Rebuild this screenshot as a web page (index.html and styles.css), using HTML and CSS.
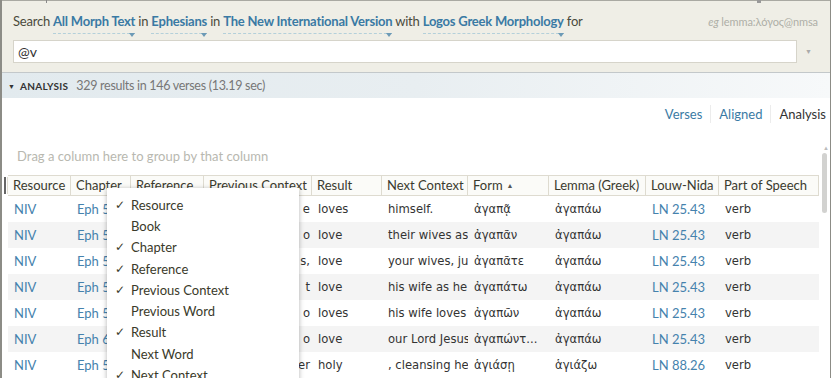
FILE: index.html
```html
<!DOCTYPE html>
<html>
<head>
<meta charset="utf-8">
<link rel="stylesheet" href="styles.css">
</head>
<body>
<div class="app">
  <div class="topmarks"><span class="tm tm1"></span><span class="tm tm2"></span></div>
  <section class="search">
    <div class="search-line">
      <div class="sentence">Search <a class="pick">All Morph Text</a> in <a class="pick">Ephesians</a> in <a class="pick">The New International Version</a> with <a class="pick">Logos Greek Morphology</a> for</div>
      <div class="hint"><i>eg</i> lemma:λόγος@nmsa</div>
    </div>
    <div class="input-row">
      <div class="input">@v</div>
      <span class="drop">▼</span>
    </div>
  </section>
  <div class="bar">
    <span class="tri">▼</span><span class="bar-title">ANALYSIS</span><span class="bar-info">329 results in 146 verses (13.19 sec)</span>
  </div>
  <div class="content">
    <nav class="tabs">
      <a class="tab link">Verses</a><span class="sep"></span><a class="tab link">Aligned</a><span class="sep"></span><span class="tab cur">Analysis</span>
    </nav>
    <div class="group">Drag a column here to group by that column</div>
    <div class="gridwrap">
      <div class="grid">
        <div class="row head">
          <span class="handle"></span>
          <span class="c c1">Resource</span><span class="c c2">Chapter</span><span class="c c3">Reference</span><span class="c c4">Previous Context</span><span class="c c5">Result</span><span class="c c6">Next Context</span><span class="c c7">Form <span class="sort">▲</span></span><span class="c c8">Lemma (Greek)</span><span class="c c9">Louw-Nida</span><span class="c c10">Part of Speech</span>
        </div>
        <div class="row"><span class="handle"></span><span class="c c1 lk">NIV</span><span class="c c2 lk">Eph 5</span><span class="c c3"></span><span class="c c4 r">e</span><span class="c c5">loves</span><span class="c c6">himself.</span><span class="c c7">ἀγαπᾷ</span><span class="c c8">ἀγαπάω</span><span class="c c9 lk">LN 25.43</span><span class="c c10">verb</span></div>
        <div class="row alt"><span class="handle"></span><span class="c c1 lk">NIV</span><span class="c c2 lk">Eph 5</span><span class="c c3"></span><span class="c c4 r">o</span><span class="c c5">love</span><span class="c c6">their wives as</span><span class="c c7">ἀγαπᾶν</span><span class="c c8">ἀγαπάω</span><span class="c c9 lk">LN 25.43</span><span class="c c10">verb</span></div>
        <div class="row"><span class="handle"></span><span class="c c1 lk">NIV</span><span class="c c2 lk">Eph 5</span><span class="c c3"></span><span class="c c4 r">s,</span><span class="c c5">love</span><span class="c c6">your wives, just</span><span class="c c7">ἀγαπᾶτε</span><span class="c c8">ἀγαπάω</span><span class="c c9 lk">LN 25.43</span><span class="c c10">verb</span></div>
        <div class="row alt"><span class="handle"></span><span class="c c1 lk">NIV</span><span class="c c2 lk">Eph 5</span><span class="c c3"></span><span class="c c4 r">t</span><span class="c c5">love</span><span class="c c6">his wife as he</span><span class="c c7">ἀγαπάτω</span><span class="c c8">ἀγαπάω</span><span class="c c9 lk">LN 25.43</span><span class="c c10">verb</span></div>
        <div class="row"><span class="handle"></span><span class="c c1 lk">NIV</span><span class="c c2 lk">Eph 5</span><span class="c c3"></span><span class="c c4 r">o</span><span class="c c5">loves</span><span class="c c6">his wife loves</span><span class="c c7">ἀγαπῶν</span><span class="c c8">ἀγαπάω</span><span class="c c9 lk">LN 25.43</span><span class="c c10">verb</span></div>
        <div class="row alt"><span class="handle"></span><span class="c c1 lk">NIV</span><span class="c c2 lk">Eph 6</span><span class="c c3"></span><span class="c c4 r">o</span><span class="c c5">love</span><span class="c c6">our Lord Jesus</span><span class="c c7">ἀγαπώντ...</span><span class="c c8">ἀγαπάω</span><span class="c c9 lk">LN 25.43</span><span class="c c10">verb</span></div>
        <div class="row"><span class="handle"></span><span class="c c1 lk">NIV</span><span class="c c2 lk">Eph 5</span><span class="c c3"></span><span class="c c4 r">er</span><span class="c c5">holy</span><span class="c c6">, cleansing her</span><span class="c c7">ἁγιάσῃ</span><span class="c c8">ἁγιάζω</span><span class="c c9 lk">LN 88.26</span><span class="c c10">verb</span></div>
      </div>
      <div class="scroll"><span class="up">▲</span><span class="thumb"></span></div>
    </div>
    <ul class="menu">
      <li class="on">Resource</li>
      <li>Book</li>
      <li class="on">Chapter</li>
      <li class="on">Reference</li>
      <li class="on">Previous Context</li>
      <li>Previous Word</li>
      <li class="on">Result</li>
      <li>Next Word</li>
      <li class="on">Next Context</li>
    </ul>
  </div>
</div>
</body>
</html>
```

FILE: styles.css
```css
* { box-sizing: border-box; }
html, body { margin: 0; padding: 0; }
body {
  width: 833px; height: 378px; overflow: hidden; background: #fff;
  font-family: Lato, "Open Sans", sans-serif; color: #3a3a2e;
}
.app {
  position: relative;
  width: 831px; height: 378px;
  border-left: 2px solid #8c8c86;
  border-right: 1px solid #8c8c86;
  display: flex; flex-direction: column;
}
.topmarks { height: 2px; background: #efeee6; border-top: 1px solid #a9a9a2; position: relative; }
.tm { position: absolute; top: -1px; width: 1px; height: 3px; background: #888; }
.tm1 { left: 44px; }
.tm2 { left: 755px; width: 4px; background: #999; }
.search {
  background: #efeee6; height: 72px;
  padding: 11px 0 0 11px;
  border-bottom: 1px solid #c3c8ca;
}
.search-line { display: flex; justify-content: space-between; align-items: baseline; height: 24px; padding-right: 12px; }
.sentence { font-size: 13px; color: #4a4a3c; letter-spacing: -0.22px; }
.pick {
  position: relative; color: #3a7aa4; font-weight: 700;
  border-bottom: 1px dashed #b4d0da; padding-bottom: 4px;
}
.pick::after {
  content: ""; position: absolute; right: 0; bottom: -4px;
  border-left: 3px solid transparent; border-right: 3px solid transparent;
  border-top: 4px solid #6c9ab6;
}
.hint { font-size: 11px; color: #aeaea6; letter-spacing: -0.1px; }
.input-row { display: flex; align-items: center; margin-top: 3px; }
.input {
  width: 784px; height: 23px; background: #fff; border: 1px solid #d6d4ca;
  font-size: 14px; padding: 2px 0 0 4px; color: #333;
}
.drop { font-size: 7px; color: #aaa; margin-left: 8px; }
.bar {
  height: 25px; display: flex; align-items: center; padding-left: 6px;
  background: linear-gradient(to right, #e2eaee 0%, #e8eef1 50%, #f7f9fa 100%);
}
.tri { font-size: 7px; color: #333; margin-right: 5px; }
.bar-title { font-size: 10px; font-weight: 700; letter-spacing: 0.3px; color: #333; margin-right: 8px; }
.bar-info { font-size: 12.5px; color: #777; letter-spacing: -0.3px; }
.content { position: relative; flex: 1; background: #fff; }
.tabs { display: flex; justify-content: flex-end; align-items: center; height: 30px; padding: 2px 4px 0 0; font-size: 13px; }
.tab { padding: 0 8px; }
.tab:last-child { padding-right: 0; }
.link { color: #3a7aa4; }
.cur { color: #333; }
.sep { width: 1px; height: 18px; background: #ececec; }
.group { font-size: 13px; color: #b8b8b0; padding: 20px 0 0 15px; height: 47px; }
.gridwrap { display: flex; }
.grid { width: 817px; }
.row { display: flex; height: 26px; align-items: center; font-family: "DejaVu Sans", sans-serif; font-size: 11.6px; color: #333; padding-top: 1px; }
.row.alt { background: linear-gradient(#f4f4f4, #f4f4f4) no-repeat 6px 0 / 811px 100%; }
.row.head { height: 21px; font-family: Lato, sans-serif; font-size: 13px; color: #3a3a2e; align-items: stretch; padding-top: 0; }
.head .c { border: 1px solid #dedbd0; border-left: none; background: #fbfbf8; display: flex; align-items: center; padding-left: 5px; }
.handle { width: 6px; flex: none; align-self: stretch; }
.head .handle { border-left: 2px solid #666; margin-left: 2px; height: 17px; align-self: center; width: 4px; border-right: 1px solid #dedbd0; }
.c { flex: none; white-space: nowrap; overflow: hidden; padding-left: 6px; }
.c1 { width: 63px; }
.c2 { width: 60px; }
.c3 { width: 73px; }
.c4 { width: 108px; }
.c5 { width: 70px; }
.c6 { width: 86px; }
.c7 { width: 81px; }
.c8 { width: 97px; }
.c9 { width: 73px; }
.c10 { width: 100px; }
.r { text-align: right; padding-right: 2px; }
.lk { color: #4582ad; font-family: Lato, sans-serif; font-size: 13px; }
.sort { font-size: 7px; color: #555; margin-left: 4px; }
.scroll { position: relative; width: 12px; }
.up { position: absolute; left: 4px; top: -31px; font-size: 6px; color: #bbb; }
.thumb { position: absolute; left: 3px; top: -22px; width: 5px; height: 60px; background: #d2d2d0; border-radius: 3px; }
.menu {
  position: absolute; left: 105px; top: 90px; width: 192px; height: 200px;
  margin: 0; padding: 7px 0 0; list-style: none; background: #fff;
  box-shadow: 0 1px 5px rgba(0,0,0,0.3);
  font-size: 13px; color: #3a3a2a;
}
.menu li { height: 21.25px; line-height: 21px; padding-left: 24px; position: relative; }
.menu li.on::before { content: "✓"; position: absolute; left: 8px; top: 0; font-size: 12px; font-family: "DejaVu Sans", sans-serif; }
```
